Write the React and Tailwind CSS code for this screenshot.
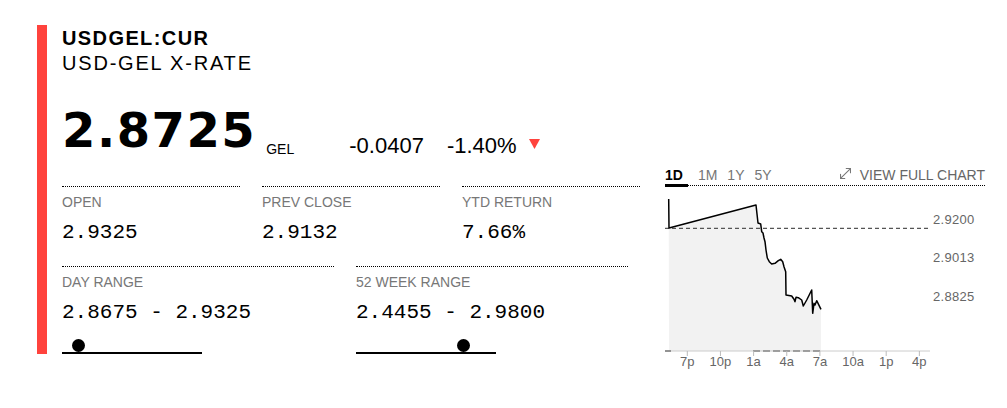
import React from "react";
import { MoveDiagonal } from "lucide-react";

const firstRow = [
  { label: "OPEN", value: "2.9325" },
  { label: "PREV CLOSE", value: "2.9132" },
  { label: "YTD RETURN", value: "7.66%" },
];

const secondRow = [
  { label: "DAY RANGE", value: "2.8675 - 2.9325", dot: "ml-[10px]" },
  { label: "52 WEEK RANGE", value: "2.4455 - 2.9800", dot: "ml-[101px]" },
];

const tabs = ["1D", "1M", "1Y", "5Y"];

const linePoints =
  "668.7,199 669,228 756,205 758,223 760.7,224 761.7,231.7 763,233 764,238 765,241.7 766,250 767.3,258 769.3,261.7 771.7,264 775,263.3 778.3,260.7 780.7,259.3 782.7,261.7 784,266.7 785.7,271.7 786,295 791.7,296 794,299.3 795,301.7 796,297.3 798.3,297.7 801.7,300 803.3,306 806.7,300 811.7,290 812.7,313.3 814,303.3 815,305 816.7,300.7 821,309.3";

const timeLabels = ["7p", "10p", "1a", "4a", "7a", "10a", "1p", "4p"];

const priceLabels = [
  { text: "2.9200", y: 223.5 },
  { text: "2.9013", y: 262 },
  { text: "2.8825", y: 301 },
];

const StatCell = ({ label, value, width, children }) => (
  <div className={`${width} border-t border-dotted border-black pt-[7px]`}>
    <div className="text-[14px] leading-[16px] text-[#777]">{label}</div>
    <div className="mt-[11px] font-['Liberation_Mono',monospace] text-[21px] leading-[24px] text-black">
      {value}
    </div>
    {children}
  </div>
);

const Chart = () => (
  <svg width="320" height="190" viewBox="665 186 320 190" className="block">
    <polygon points={`${linePoints} 821,351 669,351`} fill="#f2f2f2" />
    <line x1="665" y1="228.3" x2="930" y2="228.3" stroke="#555" strokeWidth="1.2" strokeDasharray="4 3" />
    <line x1="665" y1="351" x2="930" y2="351" stroke="#ccc" strokeWidth="1" />
    <line x1="665" y1="351" x2="671" y2="351" stroke="#777" strokeWidth="1.5" />
    <line x1="753" y1="351" x2="821" y2="351" stroke="#888" strokeWidth="1.5" strokeDasharray="7 3" />
    <polyline points={linePoints} fill="none" stroke="#000" strokeWidth="1.5" strokeLinejoin="round" />
    {timeLabels.map((t, i) => {
      const x = 687.3 + i * 33.15;
      return (
        <g key={t}>
          <line x1={x} y1="351" x2={x} y2="356" stroke="#bbb" strokeWidth="1" />
          <text
            x={x}
            y="366"
            textAnchor="middle"
            fontFamily="'Liberation Sans', Arial, sans-serif"
            fontSize="13"
            fill="#666"
          >
            {t}
          </text>
        </g>
      );
    })}
    {priceLabels.map((p) => (
      <text
        key={p.text}
        x="933"
        y={p.y}
        fontFamily="'Liberation Sans', Arial, sans-serif"
        fontSize="13"
        letterSpacing="0.3"
        fill="#666"
      >
        {p.text}
      </text>
    ))}
  </svg>
);

const App = () => {
  return (
    <div className="flex items-start bg-white pl-[37px] pt-[25px] font-['Liberation_Sans',Arial,sans-serif] text-black min-h-[408px]">
      <div className="flex">
        <div className="w-[10px] shrink-0 bg-[#ff433d]" />
        <div className="w-[593px] pl-[15px] pt-[2px]">
          <div className="text-[20px] font-bold leading-[22px] tracking-[1.4px]">USDGEL:CUR</div>
          <div className="mt-[2px] text-[20px] leading-[24px] tracking-[1.8px]">USD-GEL X-RATE</div>

          <div className="mt-[31px] flex h-[48px] items-start">
            <div className="font-['DejaVu_Sans',sans-serif] text-[48px] font-bold leading-[48px] tracking-[1.5px]">
              2.8725
            </div>
            <div className="ml-[10px] mt-[35px] text-[14px] leading-[16px]">GEL</div>
            <div className="ml-[55px] mt-[27px] text-[22px] leading-[26px]">-0.0407</div>
            <div className="ml-[23px] mt-[27px] text-[22px] leading-[26px]">-1.40%</div>
            <svg width="11" height="10" viewBox="0 0 11 10" className="ml-[12px] mt-[33px]">
              <polygon points="0,0 11,0 5.5,10" fill="#ff433d" />
            </svg>
          </div>

          <div className="mt-[32px] flex gap-x-[22px]">
            {firstRow.map((s) => (
              <StatCell key={s.label} label={s.label} value={s.value} width="w-[178px] pb-[21px]" />
            ))}
          </div>
          <div className="flex gap-x-[22px]">
            {secondRow.map((s) => (
              <StatCell key={s.label} label={s.label} value={s.value} width="w-[272px]">
                <div className="mt-[14px] w-[140px] border-b-2 border-black">
                  <div className={`h-[13px] w-[13px] rounded-full bg-black ${s.dot}`} />
                </div>
              </StatCell>
            ))}
          </div>
        </div>
      </div>

      {/* chart */}
      <div className="ml-[25px] mt-[141px] w-[320px]">
        <div className="flex items-end border-b border-dotted border-black text-[14px] leading-[18px]">
          <div className="flex items-end gap-[10px]">
            {tabs.map((t, i) =>
              i === 0 ? (
                <div key={t} className="-mb-[2px] border-b-[3px] border-black pr-[5px] font-bold text-black">
                  {t}
                </div>
              ) : (
                <div key={t} className="pb-[1px] text-[#767676]">
                  {t}
                </div>
              )
            )}
          </div>
          <div className="ml-auto flex items-center gap-[6px] pb-[1px] text-[#666]">
            <MoveDiagonal size={17} strokeWidth={1.5} className="-mt-[3px] text-[#777]" />
            <span>VIEW FULL CHART</span>
          </div>
        </div>
        <Chart />
      </div>
    </div>
  );
};

export default App;
